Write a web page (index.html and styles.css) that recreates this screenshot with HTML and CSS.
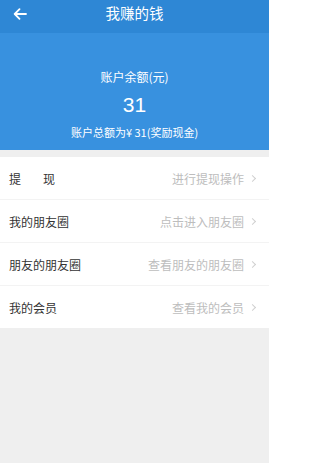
FILE: index.html
```html
<!DOCTYPE html>
<html lang="zh">
<head>
<meta charset="utf-8">
<title>我赚的钱</title>
<link rel="stylesheet" href="styles.css">
</head>
<body>
<div class="page">
  <header class="topbar">
    <svg class="back" width="14" height="12" viewBox="0 0 14 12"><path d="M13 6H2M6.5 1.2L1.7 6l4.8 4.8" fill="none" stroke="#fff" stroke-width="1.8" stroke-linecap="round" stroke-linejoin="round"/></svg>
    <h1 class="title">我赚的钱</h1>
  </header>
  <section class="balance">
    <div class="balance-label">账户余额(元)</div>
    <div class="balance-amount">31</div>
    <div class="balance-total">账户总额为¥ 31(奖励现金)</div>
  </section>
  <div class="gap"></div>
  <ul class="list">
    <li class="row"><span class="label">提<span class="sp"></span>现</span><span class="hint">进行提现操作</span><i class="chev"></i></li>
    <li class="row"><span class="label">我的朋友圈</span><span class="hint">点击进入朋友圈</span><i class="chev"></i></li>
    <li class="row"><span class="label">朋友的朋友圈</span><span class="hint">查看朋友的朋友圈</span><i class="chev"></i></li>
    <li class="row"><span class="label">我的会员</span><span class="hint">查看我的会员</span><i class="chev"></i></li>
  </ul>
  <div class="rest"></div>
</div>
</body>
</html>
```
FILE: styles.css
```css
html, body {
  margin: 0;
  padding: 0;
  background: #ffffff;
  height: 100%;
}
body {
  font-family: "Noto Sans CJK SC", "Noto Sans", sans-serif;
}
.page {
  width: 269px;
  min-height: 463px;
  display: flex;
  flex-direction: column;
  background: #efefef;
}
.topbar {
  height: 33px;
  background: #2e87d5;
  display: flex;
  align-items: center;
  justify-content: center;
  position: relative;
}
.back {
  position: absolute;
  left: 13px;
  top: 8px;
}
.title {
  margin: 0;
  color: #fff;
  font-size: 14.5px;
  font-weight: normal;
  line-height: 1;
  margin-top: -6px;
}
.balance {
  height: 117px;
  background: #3891df;
  color: #fff;
  display: flex;
  flex-direction: column;
  align-items: center;
  box-sizing: border-box;
  padding-top: 36px;
}
.balance-label {
  font-size: 12px;
  line-height: 16px;
}
.balance-amount {
  font-family: "Liberation Sans", sans-serif;
  font-size: 21px;
  line-height: 24px;
  margin-top: 8px;
}
.balance-total {
  font-size: 11px;
  line-height: 14px;
  margin-top: 8px;
}
.gap {
  height: 7px;
  background: #efefef;
}
.list {
  list-style: none;
  margin: 0;
  padding: 0;
  background: #fff;
}
.row {
  height: 42px;
  display: flex;
  align-items: center;
  padding: 0 14px 0 9px;
  border-bottom: 1px solid #f3f3f3;
  font-size: 12px;
}
.row:last-child {
  border-bottom: none;
}
.label {
  color: #333;
  flex: 1;
  display: flex;
}
.sp {
  display: inline-block;
  width: 22px;
}
.hint {
  color: #bdbdbd;
}
.chev {
  width: 4px;
  height: 4px;
  border-top: 1px solid #d0d0d0;
  border-right: 1px solid #d0d0d0;
  transform: rotate(45deg);
  margin-left: 6px;
}
.rest {
  flex: 1;
  background: #efefef;
}
```
